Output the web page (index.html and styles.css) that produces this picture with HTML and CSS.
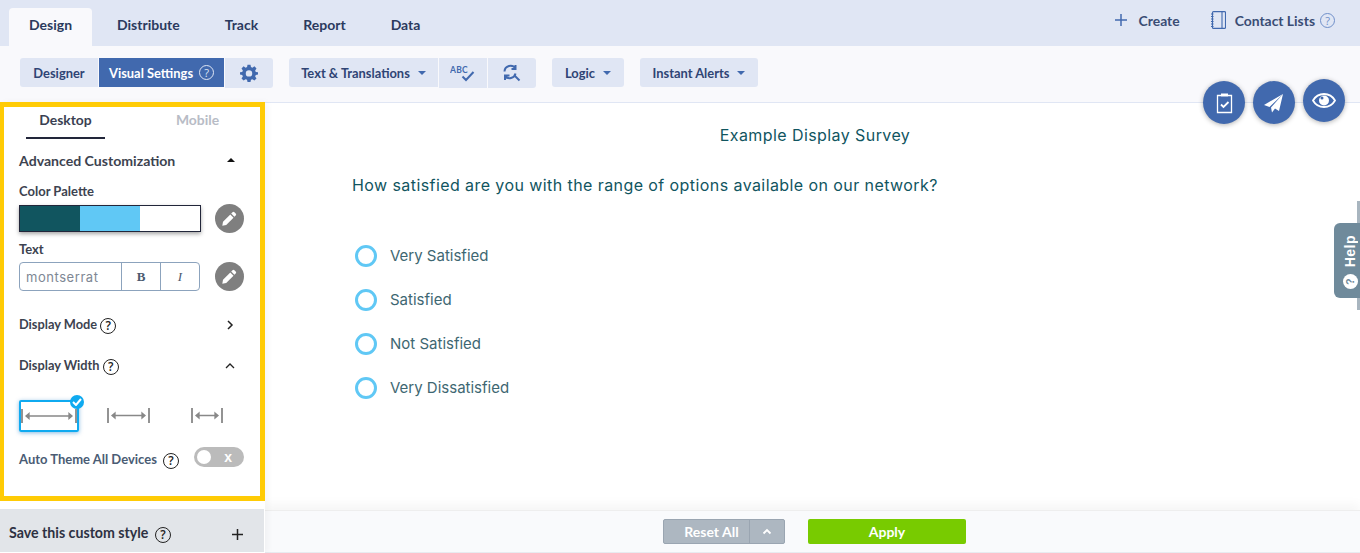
FILE: index.html
```html
<!DOCTYPE html>
<html lang="en">
<head>
<meta charset="utf-8">
<title>Example Display Survey</title>
<link rel="stylesheet" href="styles.css">
</head>
<body>
<div class="app">
  <header class="topbar">
    <nav class="tabs">
      <a class="tab tab-active">Design</a>
      <a class="tab">Distribute</a>
      <a class="tab">Track</a>
      <a class="tab">Report</a>
      <a class="tab">Data</a>
    </nav>
    <div class="top-actions">
      <a class="top-link">
        <svg class="ico-plus" width="14" height="14" viewBox="0 0 14 14"><path d="M7 1v12M1 7h12" stroke="#4169ae" stroke-width="1.5" fill="none"/></svg>
        Create
      </a>
      <a class="top-link">
        <svg width="15" height="18" viewBox="0 0 15 18" fill="none" stroke="#4169ae" stroke-width="1.1"><rect x="1.500" y=".6" width="13" height="16.800" rx="1"/><path d="M11 .6v16.800M0 3h2.500M0 5.500h2.500M0 8h2.500M0 10.500h2.500M0 13h2.500M0 15.500h2.500"/></svg>
        Contact Lists <span class="help help-blue">?</span>
      </a>
    </div>
  </header>

  <div class="toolbar">
    <div class="btn-group">
      <button class="tbtn btn-first">Designer</button>
      <button class="tbtn tbtn-active">Visual Settings <span class="help help-white">?</span></button>
      <button class="tbtn tbtn-icon btn-last">
        <svg width="18" height="18" viewBox="0 0 24 24"><path fill="#4169ae" fill-rule="evenodd" d="M10 1h4l.6 3.1 1.9.8 2.7-1.8 2.8 2.8-1.8 2.7.8 1.9L24 11v3l-3 .6-.8 1.9 1.8 2.7-2.8 2.8-2.7-1.8-1.9.8L14 24h-4l-.6-3-1.900-.8-2.700 1.800L2 19.200l1.800-2.700-.8-1.900L0 14v-3l3-.5.8-1.900L2 5.900l2.800-2.800 2.700 1.800 1.900-.8zM12 8.200a4.300 4.300 0 1 0 0 8.600 4.300 4.300 0 0 0 0-8.600z"/></svg>
      </button>
    </div>
    <div class="btn-group">
      <button class="tbtn btn-first btn-text">Text &amp; Translations <i class="caret"></i></button>
      <button class="tbtn tbtn-icon2">
        <svg width="26" height="22" viewBox="0 0 26 22"><text x="0" y="11" class="abc">ABC</text><path d="M12.500 14.500l3.500 3.500 7.500-8" stroke="#4169ae" stroke-width="2" fill="none"/></svg>
      </button>
      <button class="tbtn tbtn-icon2 btn-last">
        <svg width="18" height="18" viewBox="0 0 18 18" fill="none" stroke="#4169ae" stroke-width="2"><path d="M1.500 7.500A6 6 0 0 1 12.500 4.500M12.500 1v4h-4M12.500 9.500A6 6 0 0 1 2 12M2 16v-4.500h4.500"/><path d="M11.500 11.500l5 5"/></svg>
      </button>
    </div>
    <button class="tbtn btn-solo btn-logic">Logic <i class="caret"></i></button>
    <button class="tbtn btn-solo btn-alerts">Instant Alerts <i class="caret"></i></button>
  </div>

  <div class="workspace">
    <aside class="side">
      <section class="panel">
        <div class="side-tabs">
          <span class="side-tab side-tab-on">Desktop</span>
          <span class="side-tab side-tab-off">Mobile</span>
        </div>
        <div class="row row-adv">
          <span class="row-title">Advanced Customization</span>
          <i class="tri-up"></i>
        </div>
        <div class="label label-palette">Color Palette</div>
        <div class="tool-row">
          <div class="palette"><i class="sw sw1"></i><i class="sw sw2"></i><i class="sw sw3"></i></div>
          <span class="pencil"><svg width="15" height="15" viewBox="0 0 15 15"><path fill="#fff" d="M10.500 1.300a1.300 1.300 0 0 1 1.900 0l1.300 1.300a1.300 1.300 0 0 1 0 1.900l-1.300 1.300-3.200-3.200zM8.300 3.500l3.200 3.200-7.300 7.300-3.900.7.700-3.900z"/></svg></span>
        </div>
        <div class="label label-text">Text</div>
        <div class="tool-row tool-row-text">
          <div class="fontbox">
            <span class="fontname">montserrat</span>
            <span class="fontbtn fontb">B</span>
            <span class="fontbtn fonti">I</span>
          </div>
          <span class="pencil"><svg width="15" height="15" viewBox="0 0 15 15"><path fill="#fff" d="M10.500 1.300a1.300 1.300 0 0 1 1.900 0l1.300 1.300a1.300 1.300 0 0 1 0 1.900l-1.300 1.300-3.200-3.200zM8.300 3.500l3.200 3.200-7.300 7.300-3.900.7.700-3.900z"/></svg></span>
        </div>
        <div class="row row-mode">
          <span class="row-title row-sm">Display Mode <span class="help help-dark">?</span></span>
          <svg width="8" height="10" viewBox="0 0 8 10"><path d="M2 1l4 4-4 4" stroke="#222" stroke-width="1.500" fill="none"/></svg>
        </div>
        <div class="row row-width">
          <span class="row-title row-sm">Display Width <span class="help help-dark">?</span></span>
          <svg width="10" height="8" viewBox="0 0 10 8"><path d="M1 6l4-4 4 4" stroke="#222" stroke-width="1.300" fill="none"/></svg>
        </div>
        <div class="widths">
          <div class="width-opt width-sel">
            <svg width="56" height="16" viewBox="0 0 56 16" fill="none" stroke="#888" stroke-width="1.300"><path d="M1 1v14M55 1v14" stroke-width="1.800"/><path d="M5 8h46M8 5.500l-3 2.500 3 2.500zM48 5.500l3 2.500-3 2.500z" fill="#888"/></svg>
            <span class="check"><svg width="10" height="8" viewBox="0 0 10 8"><path d="M1 4l3 3 5-6" stroke="#fff" stroke-width="2" fill="none"/></svg></span>
          </div>
          <div class="width-opt width-mid">
            <svg width="43" height="15" viewBox="0 0 43 15" fill="none" stroke="#888" stroke-width="1.300"><path d="M1 0v15M42 0v15" stroke-width="1.800"/><path d="M5 7.500h33M8 5l-3 2.500 3 2.500zM35 5l3 2.500-3 2.500z" fill="#888"/></svg>
          </div>
          <div class="width-opt width-small">
            <svg width="32" height="15" viewBox="0 0 32 15" fill="none" stroke="#888" stroke-width="1.300"><path d="M1 0v15M31 0v15" stroke-width="1.800"/><path d="M5 7.500h22M8 5l-3 2.500 3 2.500zM24 5l3 2.500-3 2.500z" fill="#888"/></svg>
          </div>
        </div>
        <div class="row row-auto">
          <span class="auto-title">Auto Theme All Devices <span class="help help-dark">?</span></span>
          <span class="toggle"><i class="knob"></i><b class="toggle-x">x</b></span>
        </div>
      </section>
      <div class="save">
        <span class="save-title">Save this custom style <span class="help help-dark">?</span></span>
        <svg class="save-plus" width="11" height="11" viewBox="0 0 11 11"><path d="M5.500 0v11M0 5.500h11" stroke="#222" stroke-width="1.500"/></svg>
      </div>
    </aside>

    <main class="main">
      <div class="survey">
        <h1 class="survey-title">Example Display Survey</h1>
        <h2 class="question">How satisfied are you with the range of options available on our network?</h2>
        <ul class="options">
          <li class="option"><i class="radio"></i>Very Satisfied</li>
          <li class="option"><i class="radio"></i>Satisfied</li>
          <li class="option"><i class="radio"></i>Not Satisfied</li>
          <li class="option"><i class="radio"></i>Very Dissatisfied</li>
        </ul>
      </div>
      <footer class="footer">
        <div class="reset"><span class="reset-label">Reset All</span><span class="reset-arrow"><svg width="10" height="7" viewBox="0 0 10 7"><path d="M1.500 5.500L5 2l3.500 3.500" stroke="#fff" stroke-width="1.800" fill="none"/></svg></span></div>
        <button class="apply">Apply</button>
      </footer>
    </main>
  </div>

  <div class="fabs">
    <span class="fab">
      <svg width="17" height="22" viewBox="0 0 17 22" fill="none" stroke="#fff" stroke-width="1.300"><path d="M5 3.500H1.500v17h14v-17H12"/><rect x="5" y="1.500" width="7" height="3" fill="#fff" stroke="none"/><path d="M5 12.500l2.500 2.500 5-5" stroke-width="1.800"/></svg>
    </span>
    <span class="fab">
      <svg width="20" height="20" viewBox="0 0 20 20"><path fill="#fff" d="M19 1L0 12l5.500 2zM19 1L7 14.500 8 19.500 11 15.500 15 18z"/></svg>
    </span>
    <span class="fab fab-up">
      <svg width="24" height="15" viewBox="0 0 24 15"><path fill="none" stroke="#fff" stroke-width="1.800" d="M1 7.500C3.200 3.600 7.200 1 12 1s8.800 2.600 11 6.500C20.800 11.400 16.800 14 12 14S3.200 11.400 1 7.500z"/><path fill="#fff" fill-rule="evenodd" d="M12 2.500a5 5 0 1 1 0 10 5 5 0 0 1 0-10zM8.500 5a1.500 1.500 0 1 0 3 0 1.500 1.500 0 0 0-3 0z"/></svg>
    </span>
  </div>

  <div class="edge"></div>
  <div class="helptab"><span class="helptab-q">?</span><span class="helptab-txt">Help</span></div>
</div>
</body>
</html>
```
FILE: styles.css
```css
* { box-sizing: border-box; }
html, body { margin: 0; height: 100%; overflow: hidden; background: #fff; }
body { font-family: "Lato", "Liberation Sans", sans-serif; color: #2b3a5e; }
button { font-family: inherit; border: 0; padding: 0; cursor: pointer; }
ul { list-style: none; margin: 0; padding: 0; }

.app { position: relative; width: 1360px; height: 553px; display: flex; flex-direction: column; }

/* top bar */
.topbar { height: 46px; background: #e0e6f4; display: flex; justify-content: space-between; padding-left: 9px; flex: none; }
.tabs { display: flex; gap: 5px; padding-top: 8px; }
.tab { padding: 0 20px; font-size: 14px; font-weight: 700; line-height: 34px; color: #2b3a5e; border-radius: 4px 4px 0 0; }
.tab-active { background: #f9f9fc; }
.top-actions { display: flex; gap: 31px; padding-right: 25px; height: 40px; align-items: center; }
.top-link { display: flex; align-items: center; gap: 9px; font-size: 13.900px; font-weight: 700; color: #3a4d74; }
.ico-plus { margin-right: 2px; }

.help { display: inline-flex; align-items: center; justify-content: center; width: 15px; height: 15px; border-radius: 50%; border: 1.3px solid currentColor; font-size: 11px; font-weight: 400; line-height: 1; vertical-align: -1px; font-family: "Open Sans", sans-serif; }
.help-blue { color: #6f8fc9; margin-left: -4px; }
.help-white { color: #dfe6f5; margin-left: 3px; }
.help-dark { width: 16px; height: 16px; color: #222; font-size: 12px; margin-left: 0; font-weight: 600; }

/* toolbar */
.toolbar { height: 56px; background: #f9f9fc; flex: none; display: flex; align-items: flex-start; gap: 16px; padding: 12px 0 0 20px; }
.btn-group { display: flex; gap: 1px; }
.tbtn { height: 29px; background: #e0e6f4; color: #2f4474; font-size: 12.900px; font-weight: 700; display: flex; align-items: center; justify-content: center; }
.btn-first { border-radius: 3px 0 0 3px; width: 78px; }
.btn-last { border-radius: 0 3px 3px 0; }
.tbtn-active { width: 125px; background: #4169ae; color: #fff; gap: 3px; }
.tbtn-icon { width: 48px; height: 30px; }
.btn-text { width: 149px; }
.tbtn-icon2 { width: 48px; height: 30px; }
.btn-solo { border-radius: 3px; }
.btn-logic { width: 72px; }
.btn-alerts { width: 118px; }
.caret { display: inline-block; width: 0; height: 0; border: 4px solid transparent; border-top: 4px solid #4169ae; border-bottom: 0; margin-left: 8px; }
.abc { font-size: 8.500px; font-weight: 700; fill: #4169ae; letter-spacing: .3px; }

/* workspace */
.workspace { flex: 1; display: flex; min-height: 0; }
.side { position: relative; z-index: 1; width: 265px; flex: none; display: flex; flex-direction: column; background: #fff; box-shadow: 3px 0 6px rgba(0,0,0,.04); }
.panel { height: 399px; border: solid #ffcb05; border-width: 5px 5px 5px 4px; display: flex; flex-direction: column; padding: 0 0 0 15px; flex: none; }
.side-tabs { display: flex; height: 32px; margin-left: 7px; }
.side-tab { font-size: 13.900px; font-weight: 700; text-align: center; line-height: 26px; }
.side-tab-on { width: 79px; color: #3a3f52; border-bottom: 2px solid #22263a; }
.side-tab-off { width: 107px; margin-left: 39px; color: #b8bcc6; }
.row { display: flex; align-items: center; justify-content: space-between; padding-right: 26px; }
.row-adv { margin-top: 12px; height: 18px; padding-right: 25px; }
.row-title { font-size: 14.100px; font-weight: 700; color: #3d4350; }
.row-sm { font-size: 12.800px; }
.tri-up { width: 0; height: 0; border: 4.500px solid transparent; border-bottom: 4.500px solid #111; border-top: 0; }
.label { font-size: 13px; font-weight: 700; color: #3d4350; line-height: 16px; }
.label-palette { margin-top: 14px; }
.label-text { margin-top: 8px; }
.tool-row { display: flex; align-items: center; justify-content: space-between; padding-right: 16px; margin-top: 5px; height: 29px; }
.tool-row-text { margin-top: 5px; }
.palette { width: 182px; height: 27px; display: flex; border: 1px solid #22263a; box-shadow: 0 2px 4px rgba(0,0,0,.35); }
.sw { display: block; width: 60px; }
.sw1 { background: #11555f; }
.sw2 { background: #60c8f5; }
.sw3 { background: #fff; flex: 1; }
.pencil { width: 29px; height: 29px; border-radius: 50%; background: #7f7f7f; display: flex; align-items: center; justify-content: center; }
.fontbox { width: 181px; height: 29px; border: 1px solid #8ca3bd; border-radius: 4px; display: flex; align-items: center; }
.fontname { width: 101px; padding: 1px 0 0 6px; font-family: "Inter", sans-serif; font-size: 13px; color: #7e8794; letter-spacing: .55px; line-height: 27px; }
.fontbtn { height: 27px; border-left: 1px solid #8ca3bd; display: flex; align-items: center; justify-content: center; font-family: "Liberation Serif", serif; font-size: 13px; color: #4b5a70; }
.fontb { width: 39px; font-weight: 700; }
.fonti { flex: 1; font-style: italic; }
.row-mode { margin-top: 24px; height: 20px; padding-right: 26px; }
.row-width { margin-top: 21px; height: 20px; padding-right: 25px; }
.widths { display: flex; align-items: center; margin-top: 24px; height: 32px; }
.width-opt { position: relative; display: flex; align-items: center; justify-content: center; }
.width-sel { width: 60px; height: 32px; border: 2px solid #0faaf0; border-radius: 2px; box-shadow: 0 1px 4px rgba(15,120,200,.5); }
.width-mid { margin: -2px 0 0 28px; }
.width-small { margin: -2px 0 0 41px; }
.check { position: absolute; top: -7px; right: -7px; width: 14px; height: 14px; border-radius: 50%; background: #0faaf0; display: flex; align-items: center; justify-content: center; }
.row-auto { margin-top: 17px; height: 20px; padding-right: 16px; }
.auto-title { font-size: 13px; font-weight: 700; color: #4a5c74; margin-top: 1px; }
.auto-title .help { margin-left: 3px; }
.toggle { position: relative; width: 50px; height: 20px; border-radius: 10px; background: #bbb; display: flex; align-items: center; justify-content: flex-end; padding-right: 12px; margin-top: -4px; }
.knob { position: absolute; left: 3px; top: 3px; width: 14px; height: 14px; border-radius: 50%; background: #fff; }
.toggle-x { color: #fff; font-size: 14px; line-height: 16px; font-family: "Liberation Sans", sans-serif; }
.save { margin-top: 8px; height: 43px; width: 264px; background: #e2e5e9; display: flex; align-items: center; justify-content: space-between; padding: 5px 21px 0 9px; flex: none; }
.save-title { font-size: 14.200px; font-weight: 700; color: #2d3142; }
.save-title .help { margin-left: 3px; }
.save-plus { margin-top: 2px; }

/* main */
.main { flex: 1; min-width: 0; display: flex; flex-direction: column; border-top: 1px solid #e0e6f4; margin-left: -1px; }
.survey { flex: 1; min-height: 0; padding: 22px 0 0 88px; font-family: "Inter", sans-serif; color: #11555f; letter-spacing: .42px; }
.survey-title { margin: 0; font-size: 16px; font-weight: 400; line-height: 20px; width: 926px; text-align: center; }
.question { margin: 30px 0 0; font-size: 16px; font-weight: 400; line-height: 20px; white-space: nowrap; }
.options { margin-top: 39px; letter-spacing: 0; }
.option { display: flex; align-items: center; gap: 13px; height: 44px; padding-bottom: 2px; font-size: 15px; color: #3e6772; margin-left: 3px; }
.radio { width: 22px; height: 22px; margin-top: 2px; border: 3px solid #60c8f5; border-radius: 50%; flex: none; }
.footer { height: 43px; flex: none; background: #f9fafc; display: flex; align-items: center; padding-left: 399px; gap: 23px; border-top: 1px solid #eee; border-bottom: 1px solid #e8ebf0; box-shadow: 0 -6px 10px rgba(0,0,0,.04); }
.reset { width: 122px; height: 25px; background: #adb7c1; border: 1px solid #9aa5b1; border-radius: 2px; display: flex; color: #fff; font-size: 14px; font-weight: 700; }
.reset-label { width: 86px; line-height: 23px; text-align: center; padding-left: 10px; border-right: 1px solid #9aa5b1; }
.reset-arrow { flex: 1; display: flex; align-items: center; justify-content: center; }
.apply { width: 158px; height: 25px; background: #78cb00; border-radius: 2px; color: #fff; font-size: 14px; font-weight: 700; }

/* overlays */
.fabs { position: absolute; top: 81px; left: 1203px; display: flex; gap: 8px; align-items: flex-start; z-index: 2; }
.fab { width: 42px; height: 43px; border-radius: 50%; background: #4169ae; box-shadow: 0 1px 5px rgba(0,0,0,.3); display: flex; align-items: center; justify-content: center; }
.fab-up { margin-top: -2px; }
.edge { position: absolute; left: 1357px; top: 201px; width: 3px; height: 109px; background: #a8b5bf; }
.helptab { position: absolute; left: 1334px; top: 223px; width: 26px; height: 75px; background: #6f8a9b; border-radius: 6px 0 0 6px; display: flex; flex-direction: column-reverse; align-items: center; justify-content: flex-start; gap: 7px; padding: 10px 0 9px 6px; color: #fff; }
.helptab-txt { writing-mode: vertical-rl; transform: rotate(180deg); font-family: "Liberation Sans", sans-serif; font-size: 14px; font-weight: 700; letter-spacing: .5px; line-height: 16px; }
.helptab-q { width: 15px; height: 15px; border-radius: 50%; background: #fff; color: #6f8a9b; font-size: 11px; font-weight: 700; text-align: center; line-height: 15px; transform: rotate(-90deg); font-family: "Liberation Sans", sans-serif; }
```
